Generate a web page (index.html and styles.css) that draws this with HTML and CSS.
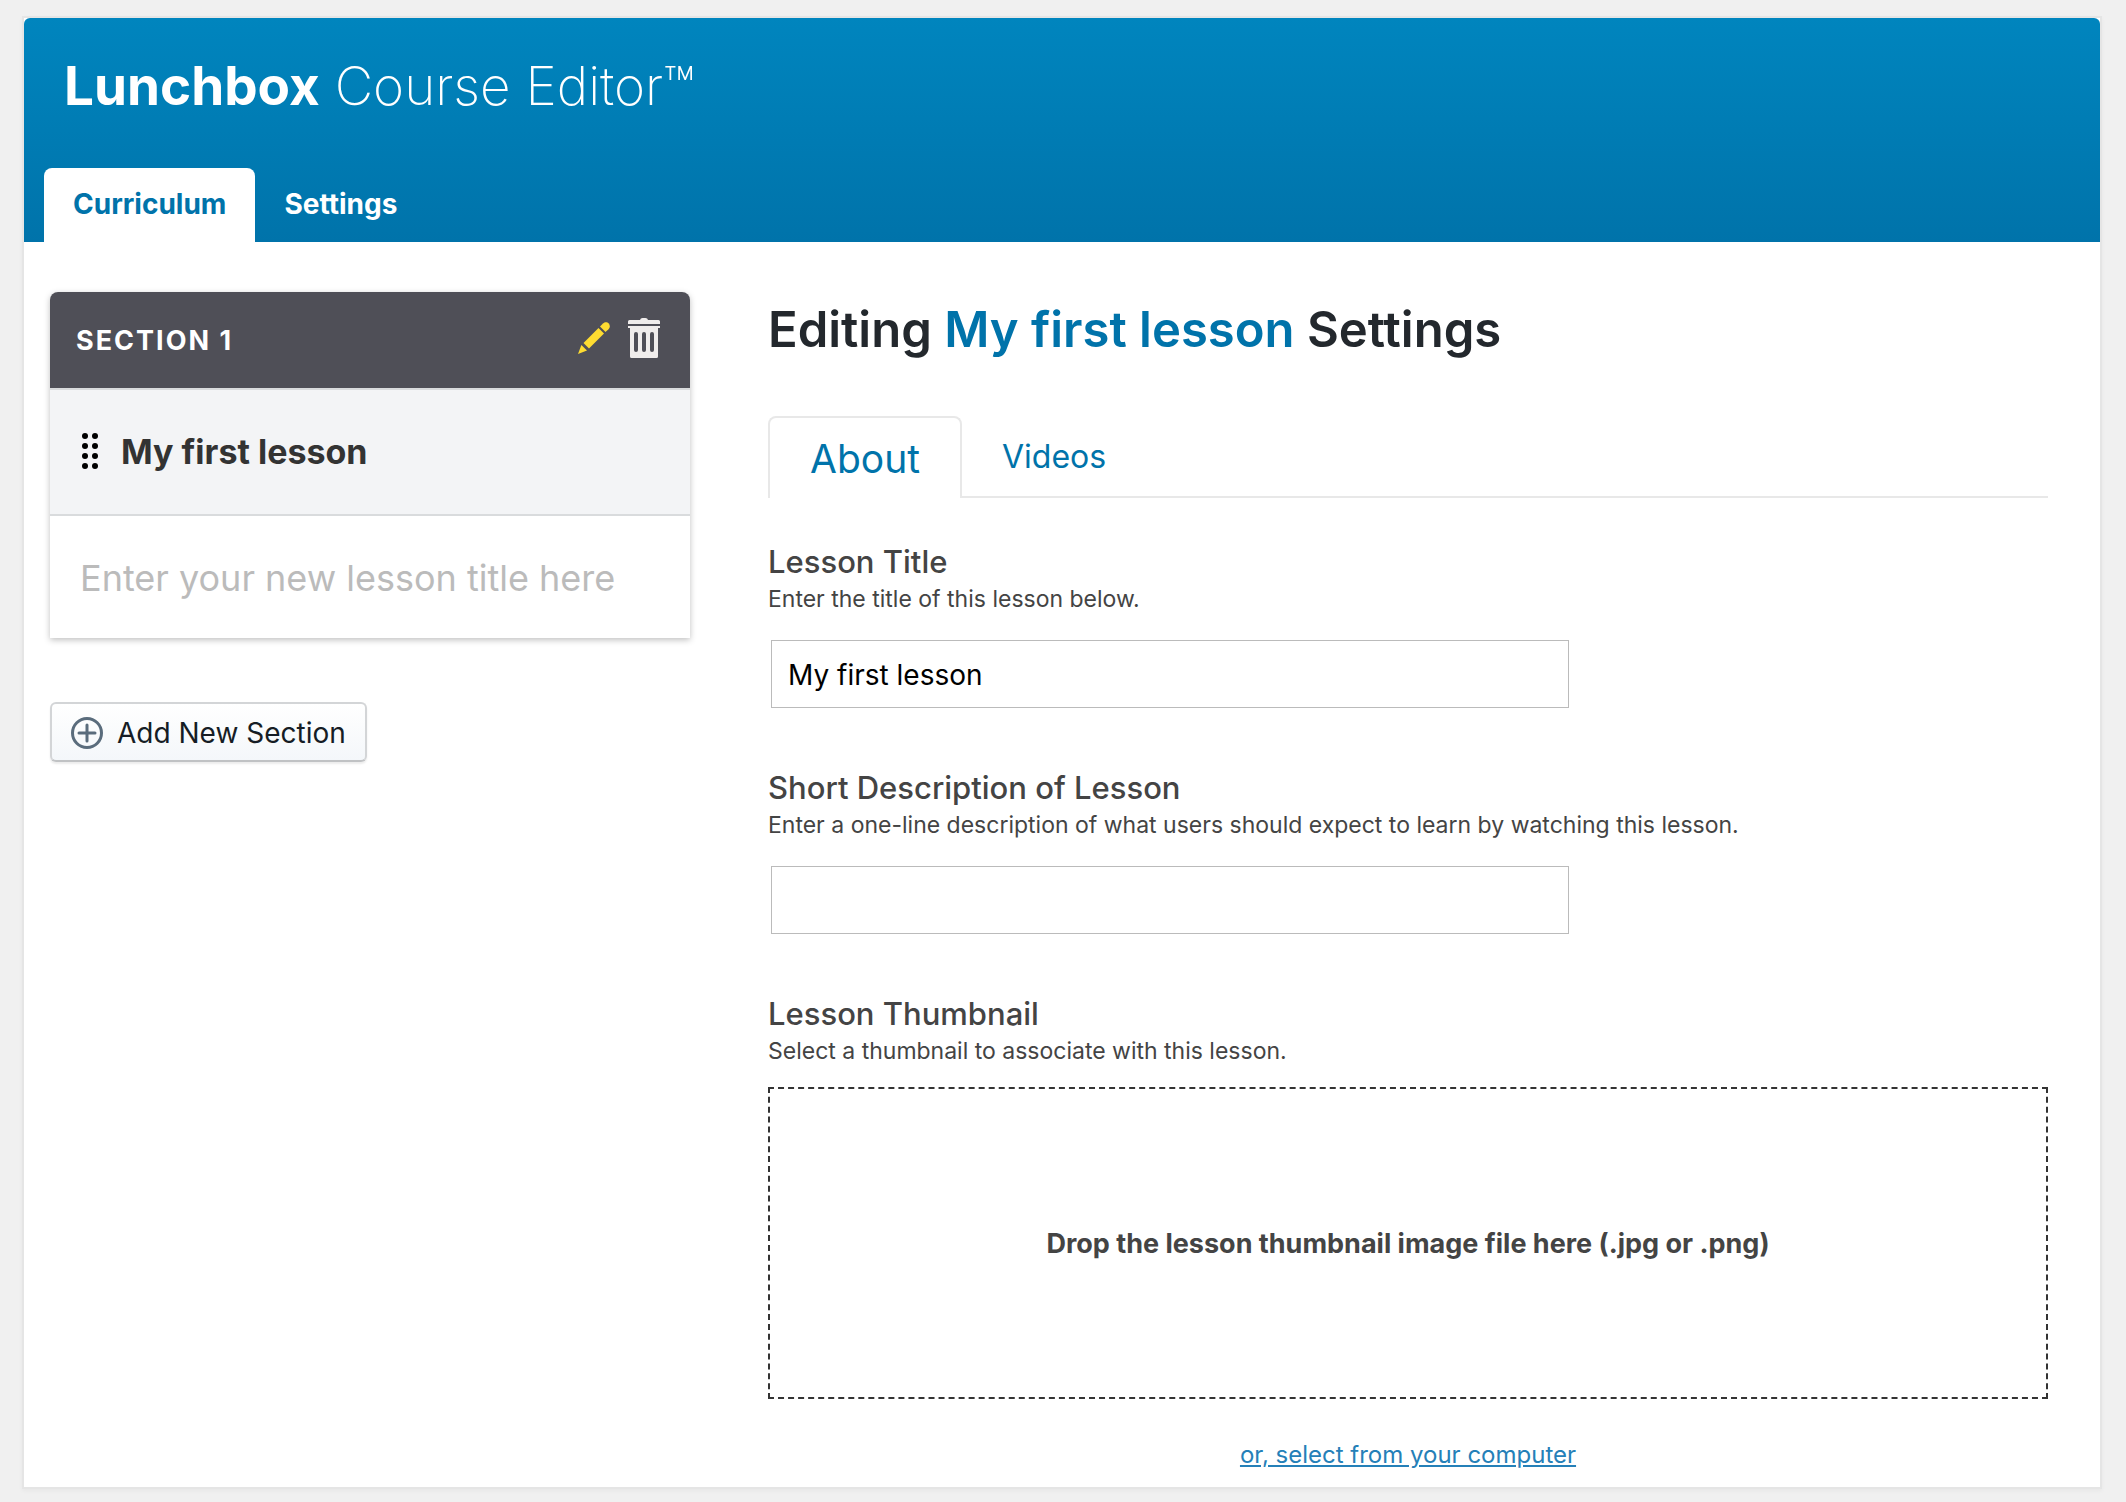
FILE: index.html
```html
<!DOCTYPE html>
<html lang="en">
<head>
<meta charset="utf-8">
<title>Lunchbox Course Editor</title>
<link rel="stylesheet" href="styles.css">
</head>
<body>
<div class="editor">
  <header class="header">
    <h1 class="brand"><strong>Lunchbox</strong> Course Editor™</h1>
    <nav class="tabs">
      <a class="tab tab-active" href="#curriculum">Curriculum</a>
      <a class="tab" href="#settings">Settings</a>
    </nav>
  </header>
  <div class="content">
    <aside class="sidebar">
      <section class="section">
        <div class="section-head">
          <h2 class="section-title">Section 1</h2>
          <button class="icon-button" type="button" aria-label="Edit section">
            <svg width="32" height="32" viewBox="0 0 32 32" fill="#fedc31">
              <path d="M0 32l3.400-9 5.600 5.600z"/>
              <path d="M5.500 21L20.500 6l5.500 5.500-15 15z"/>
              <path d="M22 4.500l3-3c2-2 4.500-1.500 5.800 0s1.500 4-.3 5.800l-3 2.800z"/>
            </svg>
          </button>
          <button class="icon-button" type="button" aria-label="Delete section">
            <svg width="32" height="40" viewBox="0 0 32 40" fill="#f0edec">
              <path d="M0 6V3.500Q0 2 1.500 2H12q.5-2 2.500-2h3q2 0 2.500 2h10.500Q32 2 32 3.500V6z"/>
              <path fill-rule="evenodd" d="M0 8h32v2h-2v28.500q0 1.500-1.500 1.500h-25Q2 40 2 38.500V10H0zM8 14q-2 0-2 2v16q0 2 2 2t2-2V16q0-2-2-2zm8 0q-2 0-2 2v16q0 2 2 2t2-2V16q0-2-2-2zm8 0q-2 0-2 2v16q0 2 2 2t2-2V16q0-2-2-2z"/>
            </svg>
          </button>
        </div>
        <div class="lesson">
          <svg width="16" height="36" viewBox="0 0 16 36">
            <circle cx="3" cy="3" r="3"/><circle cx="13" cy="3" r="3"/>
            <circle cx="3" cy="13" r="3"/><circle cx="13" cy="13" r="3"/>
            <circle cx="3" cy="23" r="3"/><circle cx="13" cy="23" r="3"/>
            <circle cx="3" cy="33" r="3"/><circle cx="13" cy="33" r="3"/>
          </svg>
          <a class="lesson-name" href="#lesson">My first lesson</a>
        </div>
        <input class="new-lesson" type="text" aria-label="New lesson title" placeholder="Enter your new lesson title here">
      </section>
      <button class="add-section" type="button">
        <svg width="32" height="32" viewBox="0 0 32 32" fill="none" stroke="#5a6c7c" stroke-width="3">
          <circle cx="16" cy="16" r="14.500"/>
          <path d="M16 8v16M8 16h16" stroke-linecap="round"/>
        </svg>
        Add New Section
      </button>
    </aside>
    <main class="main">
      <h2 class="page-title">Editing <span class="accent">My first lesson</span> Settings</h2>
      <nav class="subtabs">
        <a class="subtab subtab-active" href="#about">About</a>
        <a class="subtab" href="#videos">Videos</a>
      </nav>
      <form class="form">
        <div class="field">
          <label class="label" for="title">Lesson Title</label>
          <p class="hint">Enter the title of this lesson below.</p>
          <input class="text-box" id="title" type="text" value="My first lesson">
        </div>
        <div class="field">
          <label class="label" for="description">Short Description of Lesson</label>
          <p class="hint">Enter a one-line description of what users should expect to learn by watching this lesson.</p>
          <input class="text-box" id="description" type="text">
        </div>
        <div class="field">
          <h3 class="label">Lesson Thumbnail</h3>
          <p class="hint">Select a thumbnail to associate with this lesson.</p>
          <div class="dropzone">Drop the lesson thumbnail image file here (.jpg or .png)</div>
          <a class="select-link" href="#select">or, select from your computer</a>
        </div>
      </form>
    </main>
  </div>
</div>
</body>
</html>
```
FILE: styles.css
```css
* {
  box-sizing: border-box;
}

body {
  margin: 0;
  padding: 16px 24px 14px 22px;
  background: #f0f0f0;
  color: #444;
  font-family: Inter, "Liberation Sans", sans-serif;
}

h1, h2, h3, p {
  margin: 0;
}

a {
  color: inherit;
  text-decoration: none;
}

button, input {
  font-family: inherit;
}

.editor {
  border: 2px solid #e5e5e5;
  background: #fff;
  box-shadow: 0 2px 4px rgba(0, 0, 0, 0.04);
}

.header {
  display: flex;
  flex-direction: column;
  gap: 46px;
  padding: 32px 20px 0;
  border-radius: 6px 6px 0 0;
  background: linear-gradient(#0085be, #0073aa);
  color: #fff;
}

.brand {
  padding-left: 20px;
  font-size: 53px;
  line-height: 72px;
  font-weight: 200;
}

.brand strong {
  font-weight: 700;
}

.tabs {
  display: flex;
}

.tab {
  padding: 16px 29px 18px;
  border-radius: 8px 8px 0 0;
  font-size: 28px;
  line-height: 40px;
  font-weight: 700;
}

.tab-active {
  background: #fff;
  color: #0073aa;
}

.content {
  display: grid;
  grid-template-columns: 640px 1fr;
  gap: 78px;
  padding: 50px 52px 16px 26px;
}

.sidebar {
  display: flex;
  flex-direction: column;
  align-items: flex-start;
  gap: 64px;
}

.section {
  width: 100%;
  border-radius: 8px 8px 0 0;
  box-shadow: 0 2px 6px rgba(0, 0, 0, 0.25);
}

.section-head {
  display: flex;
  align-items: center;
  gap: 18px;
  height: 96px;
  padding: 0 30px 4px 26px;
  border-radius: 8px 8px 0 0;
  background: #4f4f57;
}

.section-title {
  flex: 1;
  padding-top: 5px;
  color: #fff;
  font-size: 27px;
  line-height: 36px;
  font-weight: 700;
  letter-spacing: 2px;
  text-transform: uppercase;
}

.icon-button {
  display: flex;
  padding: 0;
  border: 0;
  background: none;
}

.lesson {
  display: flex;
  align-items: center;
  gap: 23px;
  height: 128px;
  padding: 0 32px 2px;
  border: solid #d9dbdd;
  border-width: 2px 0;
  background: #f3f4f6;
}

.lesson-name {
  padding-top: 2px;
  color: #333;
  font-size: 34px;
  line-height: 44px;
  font-weight: 700;
}

.new-lesson {
  display: block;
  width: 100%;
  height: 122px;
  padding: 2px 30px 0;
  border: 0;
  background: #fff;
  font-size: 36px;
}

.new-lesson::placeholder {
  color: #bbb;
}

.add-section {
  display: flex;
  align-items: center;
  gap: 14px;
  height: 60px;
  padding: 2px 19px 0;
  border: 2px solid #d3d5d7;
  border-bottom-color: #c0c2c4;
  border-radius: 6px;
  background: linear-gradient(#fff, #f4f7fa);
  box-shadow: 0 2px 2px rgba(0, 0, 0, 0.08);
  color: #161d25;
  font-size: 28px;
}

.page-title {
  padding-top: 6px;
  color: #23282d;
  font-size: 49px;
  line-height: 64px;
  font-weight: 600;
}

.accent {
  color: #0073aa;
}

.subtabs {
  display: flex;
  margin-top: 54px;
  border-bottom: 2px solid #e8e8e8;
}

.subtab {
  padding: 20px 40px 18px;
  color: #0073aa;
  font-size: 32px;
  line-height: 42px;
}

.subtab-active {
  margin-bottom: -2px;
  border: 2px solid #e8e8e8;
  border-bottom: 0;
  border-radius: 8px 8px 0 0;
  background: #fff;
  font-size: 39px;
}

.form {
  display: flex;
  flex-direction: column;
  gap: 59px;
  padding-top: 43px;
}

.label {
  display: block;
  font-size: 31px;
  line-height: 42px;
  font-weight: 500;
}

.hint {
  font-size: 23px;
  line-height: 32px;
}

.text-box {
  display: block;
  width: 798px;
  max-width: 100%;
  height: 68px;
  margin: 25px 0 0 3px;
  padding: 2px 16px 0;
  border: 1px solid #bbb;
  background: #fff;
  color: #000;
  font-size: 28px;
}

.dropzone {
  display: flex;
  align-items: center;
  justify-content: center;
  min-height: 312px;
  margin-top: 20px;
  padding-top: 2px;
  border: 2px dashed #333;
  font-size: 27px;
  line-height: 36px;
  font-weight: 700;
}

.select-link {
  display: block;
  width: fit-content;
  margin: 40px auto 0;
  color: #2580b8;
  font-size: 24px;
  line-height: 32px;
  text-decoration: underline;
}
```
